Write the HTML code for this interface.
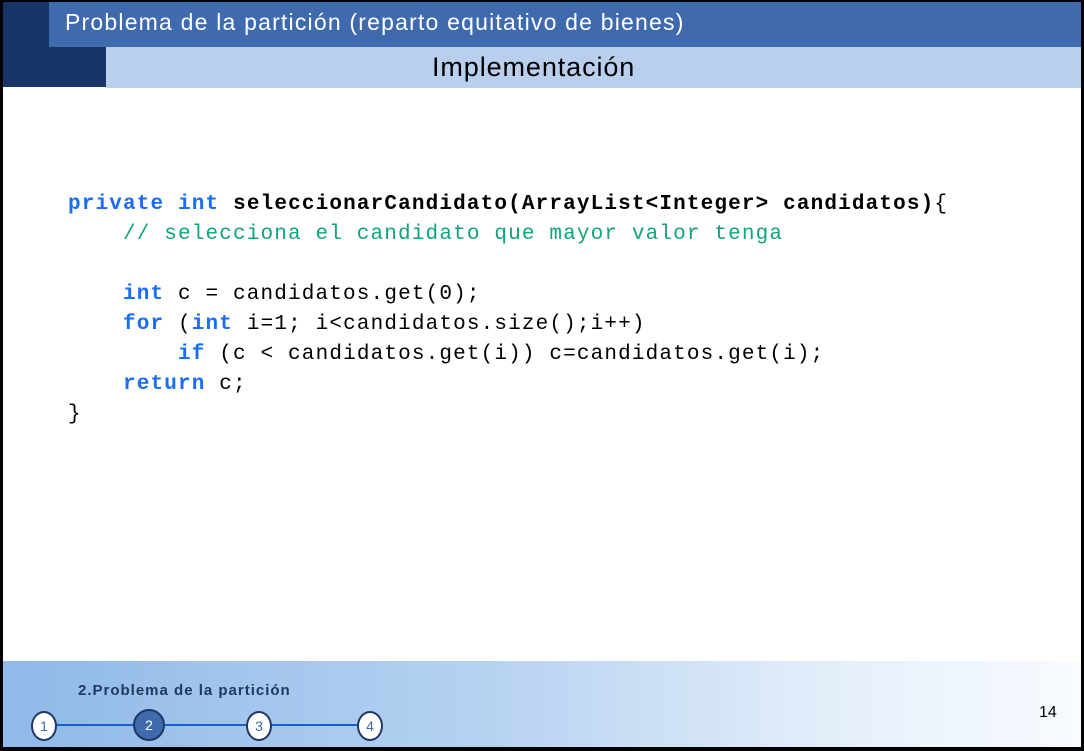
<!DOCTYPE html>
<html><head><meta charset="utf-8"><style>
body{margin:0;width:1084px;height:751px;position:relative;background:#000;overflow:hidden;font-family:"Liberation Sans",sans-serif}
.page{position:absolute;left:3px;top:2px;width:1078px;height:745px;background:#fff;overflow:hidden}
.t1{position:absolute;left:46px;top:0;width:1032px;height:45px;background:#3f6aae;color:#fff;font-size:23px;letter-spacing:1.2px;line-height:40px;padding-left:16px;box-sizing:border-box;white-space:nowrap}
.dk1{position:absolute;left:0;top:0;width:46px;height:85px;background:#18356a}
.dk2{position:absolute;left:46px;top:45px;width:57px;height:40px;background:#18356a}
.t2{position:absolute;left:103px;top:45px;width:975px;height:41px;background:#b8cfee;color:#000;font-size:27px;letter-spacing:0.9px;line-height:40px}
.t2 span{position:absolute;left:326px;top:0;white-space:nowrap}
pre{position:absolute;left:65px;top:188px;margin:0;font-family:"Liberation Mono",monospace;font-size:21px;letter-spacing:1.15px;line-height:30px;color:#000}
.k{color:#1a6ef5;font-weight:bold}.b{font-weight:bold}.c{color:#10a37f}
.foot{position:absolute;left:0;top:659px;width:1078px;height:86px;background:linear-gradient(90deg,#8fb9e8 0%,#b6d2f1 45%,#e8f1fb 80%,#f8fbff 100%)}
.sec{position:absolute;left:75px;top:21px;font-size:15px;letter-spacing:1px;font-weight:bold;color:#1f3864}
.line{position:absolute;left:40px;top:63px;width:330px;height:2px;background:#1a5fd0}
.n{position:absolute;top:50px;width:22px;height:26px;border:2px solid #1f3864;border-radius:50%;background:#fff;color:#3f6aae;font-size:14px;text-align:center;line-height:26px}
.pg{position:absolute;left:1036px;top:43px;font-size:16px;color:#000}
</style></head><body><div class="page">
<div class="t1">Problema de la partición (reparto equitativo de bienes)</div>
<div class="dk1"></div><div class="dk2"></div>
<div class="t2"><span>Implementación</span></div>
<pre><span class="k">private</span> <span class="k">int</span> <span class="b">seleccionarCandidato(ArrayList&lt;Integer&gt; candidatos)</span>{
    <span class="c">// selecciona el candidato que mayor valor tenga</span>

    <span class="k">int</span> c = candidatos.get(0);
    <span class="k">for</span> (<span class="k">int</span> i=1; i&lt;candidatos.size();i++)
        <span class="k">if</span> (c &lt; candidatos.get(i)) c=candidatos.get(i);
    <span class="k">return</span> c;
}</pre>
<div class="foot">
<div class="sec">2.Problema de la partición</div>
<div class="line"></div>
<div class="n" style="left:28px">1</div>
<div class="n" style="left:130px;width:28px;height:28px;line-height:28px;top:48px;background:#3f6aae;color:#fff">2</div>
<div class="n" style="left:243px">3</div>
<div class="n" style="left:354px">4</div>
<div class="pg">14</div>
</div>
</div></body></html>
